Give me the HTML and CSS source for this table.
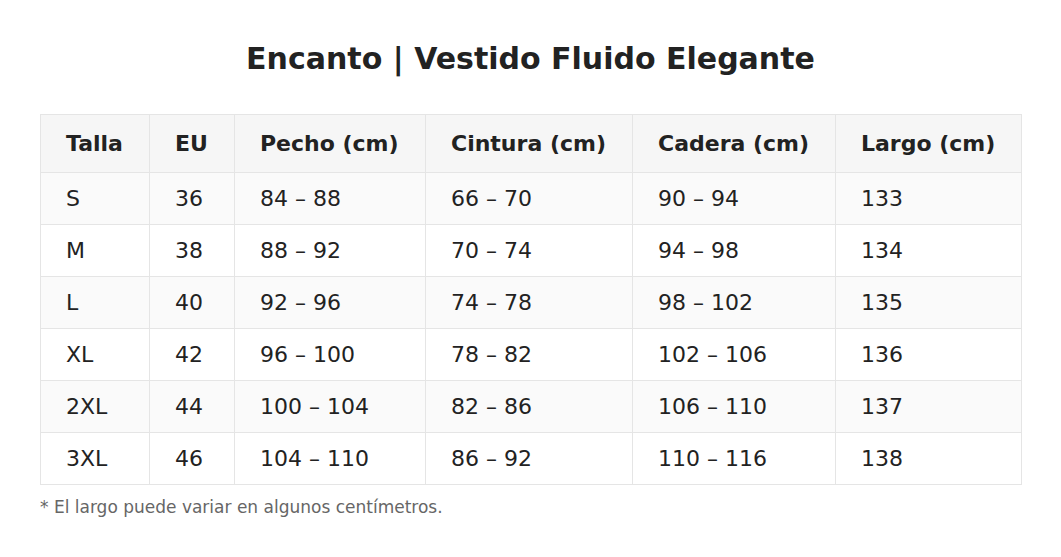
FILE: index.html
```html
<!DOCTYPE html>
<html lang="es">
<head>
<meta charset="utf-8">
<title>Encanto | Vestido Fluido Elegante</title>
<link rel="stylesheet" href="styles.css">
</head>
<body>
<main class="page">
  <h1 class="title">Encanto | Vestido Fluido Elegante</h1>
  <table class="sizes">
    <colgroup>
      <col class="c1"><col class="c2"><col class="c3"><col class="c4"><col class="c5"><col class="c6">
    </colgroup>
    <thead>
      <tr>
        <th>Talla</th>
        <th>EU</th>
        <th>Pecho (cm)</th>
        <th>Cintura (cm)</th>
        <th>Cadera (cm)</th>
        <th>Largo (cm)</th>
      </tr>
    </thead>
    <tbody>
      <tr><td>S</td><td>36</td><td>84 – 88</td><td>66 – 70</td><td>90 – 94</td><td>133</td></tr>
      <tr><td>M</td><td>38</td><td>88 – 92</td><td>70 – 74</td><td>94 – 98</td><td>134</td></tr>
      <tr><td>L</td><td>40</td><td>92 – 96</td><td>74 – 78</td><td>98 – 102</td><td>135</td></tr>
      <tr><td>XL</td><td>42</td><td>96 – 100</td><td>78 – 82</td><td>102 – 106</td><td>136</td></tr>
      <tr><td>2XL</td><td>44</td><td>100 – 104</td><td>82 – 86</td><td>106 – 110</td><td>137</td></tr>
      <tr><td>3XL</td><td>46</td><td>104 – 110</td><td>86 – 92</td><td>110 – 116</td><td>138</td></tr>
    </tbody>
  </table>
  <p class="note">* El largo puede variar en algunos centímetros.</p>
</main>
</body>
</html>
```
FILE: styles.css
```css
html, body {
  margin: 0;
  padding: 0;
  background: #ffffff;
}
body {
  font-family: "DejaVu Sans", "Liberation Sans", sans-serif;
  color: #222222;
}
.page {
  padding: 0 40px;
}
.title {
  margin: 41px 0 38px;
  font-size: 30px;
  line-height: 35px;
  font-weight: bold;
  text-align: center;
  color: #222222;
}
.sizes {
  width: 981px;
  border-collapse: collapse;
  table-layout: fixed;
  font-size: 22px;
  line-height: 26px;
}
.sizes th,
.sizes td {
  border: 1px solid #e5e5e5;
  text-align: left;
  padding: 13px 25px 12px;
}
.sizes th {
  background: #f6f6f6;
  font-weight: bold;
  padding: 16px 25px 15px;
}
.sizes tbody tr:nth-child(odd) td {
  background: #fafafa;
}
.sizes tbody tr:nth-child(even) td {
  background: #ffffff;
}
.c1 { width: 109px; }
.c2 { width: 85px; }
.c3 { width: 191px; }
.c4 { width: 207px; }
.c5 { width: 203px; }
.c6 { width: 186px; }
.note {
  margin: 11px 0 0;
  font-size: 17px;
  line-height: 22px;
  color: #666666;
}
```
